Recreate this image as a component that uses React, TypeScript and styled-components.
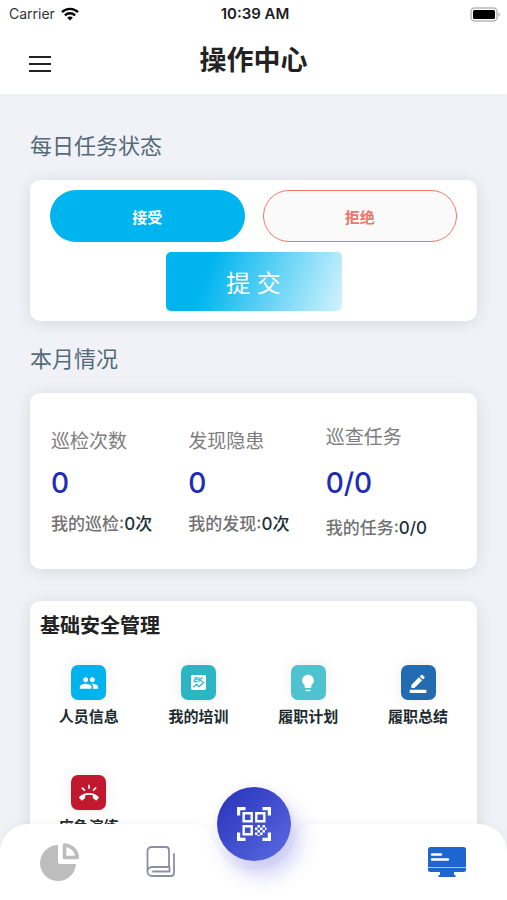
import React from "react";
import styled, { createGlobalStyle } from "styled-components";
import { MdPeople, MdLightbulb, MdBorderColor, MdRingVolume } from "react-icons/md";

const GlobalStyle = createGlobalStyle`
  *, *::before, *::after { box-sizing: border-box; }
  html, body, #root { height: 100%; }
  body {
    margin: 0;
    font-family: Inter, "Noto Sans CJK SC", sans-serif;
    color: #1c1c1e;
    background: #f0f2f7;
  }
  h1, h2, h3, p, dl, dd, ul { margin: 0; padding: 0; }
  button { font-family: inherit; border: 0; padding: 0; background: none; cursor: pointer; }
  svg { display: block; }
`;

const Screen = styled.div`
  position: relative;
  display: flex;
  flex-direction: column;
  height: 100%;
  overflow: hidden;
`;

const Top = styled.header`
  flex: none;
  background: #fff;
  box-shadow: 0 1px 3px rgba(40, 50, 90, 0.03);
  z-index: 1;
`;

const StatusBar = styled.div`
  display: grid;
  grid-template-columns: 1fr auto 1fr;
  align-items: center;
  height: 28px;
  padding: 0 6px 0 9px;
  line-height: 20px;
`;

const Carrier = styled.span`
  display: flex;
  align-items: center;
  gap: 6px;
  color: #333;
  font-size: 14px;
`;

const Clock = styled.time`
  font-weight: 600;
  font-size: 15px;
`;

const BatterySlot = styled.span`
  justify-self: end;
`;

const TitleBar = styled.div`
  display: grid;
  grid-template-columns: 48px 1fr 48px;
  align-items: center;
  height: 66px;
  padding: 0 16px;
`;

const MenuButton = styled.button`
  display: grid;
  place-items: center;
  width: 48px;
  height: 48px;
  margin-top: 6px;
`;

const PageTitle = styled.h1`
  text-align: center;
  font-size: 27px;
  line-height: 40px;
  font-weight: 700;
  color: #222;
`;

const Content = styled.main`
  flex: 1;
  min-height: 0;
  overflow-y: auto;
  scrollbar-width: none;
  padding: 32px 30px 100px;
`;

const SectionTitle = styled.h2`
  font-size: 22px;
  line-height: 40px;
  font-weight: 400;
  color: #546b78;
`;

const Card = styled.section`
  background: #fff;
  border-radius: 10px;
  box-shadow: 0 2px 16px rgba(40, 40, 70, 0.12);
`;

const TaskCard = styled(Card)`
  display: flex;
  flex-direction: column;
  align-items: center;
  gap: 10px;
  margin: 14px 0 18px;
  padding: 10px 20px;
`;

const Choices = styled.div`
  display: grid;
  grid-template-columns: 1fr 1fr;
  gap: 18px;
  width: 100%;
`;

const PillButton = styled.button<{ $outlined?: boolean }>`
  height: 52px;
  border-radius: 26px;
  font-size: 15px;
  font-weight: 700;
  color: ${(p) => (p.$outlined ? "#ee7466" : "#fff")};
  background: ${(p) => (p.$outlined ? "#fafafa" : "#00b5ef")};
  border: ${(p) => (p.$outlined ? "1px solid #ee7a70" : "0")};
`;

const SubmitButton = styled.button`
  width: 176px;
  height: 59px;
  border-radius: 5px;
  color: #fff;
  font-size: 24px;
  background: linear-gradient(110deg, #00b5ef 25%, #d3f3fe 100%);
`;

const StatsCard = styled(Card)`
  display: grid;
  grid-template-columns: repeat(3, 1fr);
  align-items: center;
  height: 176px;
  margin: 14px 0 32px;
  padding: 0 14px 0 21px;
`;

const Stat = styled.dl<{ $spread?: boolean }>`
  display: grid;
  gap: ${(p) => (p.$spread ? "14px" : "10px")};
  padding-top: 4px;
  white-space: nowrap;
`;

const StatLabel = styled.dt`
  font-size: 19px;
  line-height: 30px;
  color: #7d7d7d;
`;

const StatValue = styled.dd`
  font-size: 28px;
  line-height: 32px;
  font-weight: 500;
  color: #222bb5;
`;

const StatMine = styled.dd`
  font-size: 17px;
  line-height: 30px;
  font-weight: 500;
  color: #727272;
`;

const Count = styled.span`
  color: #203238;
`;

const ToolsCard = styled(Card)`
  padding: 10px 4px 60px;
`;

const ToolsTitle = styled.h3`
  padding-left: 6px;
  font-size: 20px;
  line-height: 30px;
  font-weight: 700;
  color: #222;
`;

const ToolGrid = styled.ul`
  display: grid;
  grid-template-columns: repeat(4, 1fr);
  row-gap: 47px;
  padding-top: 24px;
  list-style: none;
`;

const ToolButton = styled.button`
  display: flex;
  flex-direction: column;
  align-items: center;
  gap: 6px;
  width: 100%;
  font-size: 15px;
  line-height: 22px;
  font-weight: 600;
  color: #1d2b2f;
`;

const Tile = styled.span<{ $color: string }>`
  display: grid;
  place-items: center;
  width: 35px;
  height: 35px;
  border-radius: 7px;
  color: #fff;
  background: ${(p) => p.$color};
  box-shadow: 0 0 16px rgba(0, 0, 0, 0.08);
`;

const Nav = styled.nav`
  position: absolute;
  inset: auto 0 0;
  height: 76px;
  filter: drop-shadow(0 -1px 4px rgba(60, 60, 90, 0.06));
`;

const NavSurface = styled.div`
  display: grid;
  grid-template-columns: 1fr 124px 1fr;
  height: 100%;
`;

const NavSide = styled.div<{ $end?: boolean }>`
  background: #fff;
  border-radius: ${(p) => (p.$end ? "0 28px 0 0" : "28px 0 0 0")};
`;

const NavItems = styled.div`
  position: absolute;
  inset: 0;
  display: grid;
  grid-template-columns: 1fr 84px 1fr;
  padding: 0 9px;
`;

const NavGroup = styled.div`
  display: grid;
  grid-template-columns: 1fr 1fr;
  align-items: center;
`;

const NavButton = styled.button<{ $last?: boolean }>`
  display: grid;
  place-items: center;
  height: 64px;
  grid-column: ${(p) => (p.$last ? "2" : "auto")};
`;

const ScanButton = styled.button`
  justify-self: center;
  display: grid;
  place-items: center;
  width: 74px;
  height: 74px;
  margin-top: -37px;
  border-radius: 50%;
  background: linear-gradient(135deg, #2c37bd 10%, #5b6be2 100%);
  box-shadow: 8px 14px 20px rgba(80, 80, 230, 0.28);
`;

function WifiIcon() {
  return (
    <svg width="18" height="14" viewBox="0 0 18 14" fill="none" stroke="#000" strokeWidth="2.4" aria-hidden="true">
      <path d="M1 5.2C5.5.8 12.5.8 17 5.2" />
      <path d="M3.9 8.3c2.9-2.8 7.3-2.8 10.2 0" />
      <path d="M9 13.6 6.2 10.7c1.6-1.5 4-1.5 5.6 0Z" fill="#000" stroke="none" />
    </svg>
  );
}

function BatteryIcon() {
  return (
    <svg width="31" height="15" viewBox="0 0 31 15" aria-hidden="true">
      <rect x="1" y="1" width="26" height="13" rx="3.5" fill="#fff" stroke="#b9b9b9" strokeWidth="1.5" />
      <rect x="3" y="3" width="22" height="9" rx="1.5" fill="#000" />
      <path d="M28.5 5.5c2 .6 2 3.4 0 4Z" fill="#b9b9b9" />
    </svg>
  );
}

function MenuIcon() {
  return (
    <svg width="22" height="16" viewBox="0 0 22 16" stroke="#222" strokeWidth="2" aria-hidden="true">
      <path d="M0 1h22M0 8h22M0 15h22" />
    </svg>
  );
}

function TrainingIcon() {
  return (
    <svg width="15" height="15" viewBox="0 0 16 16" fill="none" aria-hidden="true">
      <rect width="16" height="16" rx="1.5" fill="#fff" />
      <path d="M3.5 3h3v2h-3v2H7M8.5 2.5v5M12.5 2.5 9 5l3.5 2.5" stroke="#2bb5c5" strokeWidth="1.2" />
      <path d="m2.5 13 3.2-3 3 2.5L14 7.5" stroke="#2bb5c5" strokeWidth="1.4" />
    </svg>
  );
}

function ScanIcon() {
  return (
    <svg width="34" height="34" viewBox="0 0 34 34" fill="none" stroke="#fff" aria-hidden="true">
      <path strokeWidth="3.2" d="M1.6 8.5V1.6h6.9M25.5 1.6h6.9v6.9M1.6 25.5v6.9h6.9M25.5 32.4h6.9v-6.9" />
      <path strokeWidth="2.4" d="M6.7 6.2h8v8h-8zM19.3 6.2h8v8h-8zM6.7 19.3h8v8h-8z" />
      <path
        fill="#fff"
        stroke="none"
        d="M20.5 18H23v2.5h-2.5zM25.5 18H28v2.5h-2.5zM18 20.5h2.5V23H18zM23 20.5h2.5V23H23zM20.5 23H23v2.5h-2.5zM25.5 23H28v2.5h-2.5zM18 25.5h2.5V28H18zM23 25.5h2.5V28H23zM28 20.5h1.5V23H28zM20.5 28H23v1h-2.5z"
      />
    </svg>
  );
}

function ChartIcon() {
  return (
    <svg width="40" height="40" viewBox="0 0 40 40" aria-hidden="true">
      <path d="M18 3A18 18 0 1 0 36 22H20.5Q18 22 18 19.5Z" fill="#bdbdbd" />
      <path d="M24.5 3v12.5h12.8A13.5 13.5 0 0 0 24.5 3Z" fill="#fff" stroke="#bdbdbd" strokeWidth="3.6" strokeLinejoin="round" />
    </svg>
  );
}

function BookIcon() {
  return (
    <svg width="30" height="32" viewBox="0 0 30 32" fill="none" stroke="#8b8fa5" strokeWidth="1.8" strokeLinecap="round" strokeLinejoin="round" aria-hidden="true">
      <path d="M1.5 26V5a4 4 0 0 1 4-4H20a3 3 0 0 1 3 3v17H6a4.5 4.5 0 0 0 0 9h19a3 3 0 0 0 3-3V8" />
      <path d="M7 25.5h16.500V21" />
    </svg>
  );
}

function MonitorIcon() {
  return (
    <svg width="40" height="30" viewBox="0 0 40 30" aria-hidden="true">
      <path d="M3.5 0h33A2.5 2.5 0 0 1 39 2.5v20a2.5 2.5 0 0 1-2.5 2.5H27v3h1.5v2h-17v-2H13v-3H3.5A2.5 2.5 0 0 1 1 22.5v-20A2.5 2.5 0 0 1 3.5 0Z" fill="#1d66d2" />
      <path d="M1 20.5h38" stroke="#a9c7f2" />
      <path d="M5 7.5h9M5 12.5h16" stroke="#fff" strokeWidth="2.4" strokeLinecap="round" />
    </svg>
  );
}

const stats = [
  { label: "巡检次数", value: "0", mine: "我的巡检:", count: "0次" },
  { label: "发现隐患", value: "0", mine: "我的发现:", count: "0次" },
  { label: "巡查任务", value: "0/0", mine: "我的任务:", count: "0/0", spread: true },
];

const tools = [
  { label: "人员信息", color: "#00b3ec", icon: <MdPeople size={20} /> },
  { label: "我的培训", color: "#2bb5c5", icon: <TrainingIcon /> },
  { label: "履职计划", color: "#4fc2cf", icon: <MdLightbulb size={20} /> },
  { label: "履职总结", color: "#226bb0", icon: <MdBorderColor size={20} /> },
  { label: "应急演练", color: "#c1172f", icon: <MdRingVolume size={20} /> },
];

export default function App() {
  return (
    <>
      <GlobalStyle />
      <Screen>
        <Top>
          <StatusBar>
            <Carrier>
              Carrier <WifiIcon />
            </Carrier>
            <Clock>10:39 AM</Clock>
            <BatterySlot>
              <BatteryIcon />
            </BatterySlot>
          </StatusBar>
          <TitleBar>
            <MenuButton aria-label="菜单">
              <MenuIcon />
            </MenuButton>
            <PageTitle>操作中心</PageTitle>
          </TitleBar>
        </Top>

        <Content>
          <SectionTitle>每日任务状态</SectionTitle>
          <TaskCard>
            <Choices>
              <PillButton>接受</PillButton>
              <PillButton $outlined>拒绝</PillButton>
            </Choices>
            <SubmitButton>提 交</SubmitButton>
          </TaskCard>

          <SectionTitle>本月情况</SectionTitle>
          <StatsCard>
            {stats.map((s) => (
              <Stat key={s.label} $spread={s.spread}>
                <StatLabel>{s.label}</StatLabel>
                <StatValue>{s.value}</StatValue>
                <StatMine>
                  {s.mine}
                  <Count>{s.count}</Count>
                </StatMine>
              </Stat>
            ))}
          </StatsCard>

          <ToolsCard>
            <ToolsTitle>基础安全管理</ToolsTitle>
            <ToolGrid>
              {tools.map((t) => (
                <li key={t.label}>
                  <ToolButton>
                    <Tile $color={t.color}>{t.icon}</Tile>
                    {t.label}
                  </ToolButton>
                </li>
              ))}
            </ToolGrid>
          </ToolsCard>
        </Content>

        <Nav>
          <NavSurface>
            <NavSide />
            <svg width="124" height="76" viewBox="0 0 124 76" aria-hidden="true">
              <path d="M0 0C12 0 18 6 21 16C27 34 42 46 62 46S97 34 103 16C106 6 112 0 124 0V76H0Z" fill="#fff" />
            </svg>
            <NavSide $end />
          </NavSurface>
          <NavItems>
            <NavGroup>
              <NavButton aria-label="统计">
                <ChartIcon />
              </NavButton>
              <NavButton aria-label="记录">
                <BookIcon />
              </NavButton>
            </NavGroup>
            <ScanButton aria-label="扫码">
              <ScanIcon />
            </ScanButton>
            <NavGroup>
              <NavButton $last aria-label="操作中心">
                <MonitorIcon />
              </NavButton>
            </NavGroup>
          </NavItems>
        </Nav>
      </Screen>
    </>
  );
}
